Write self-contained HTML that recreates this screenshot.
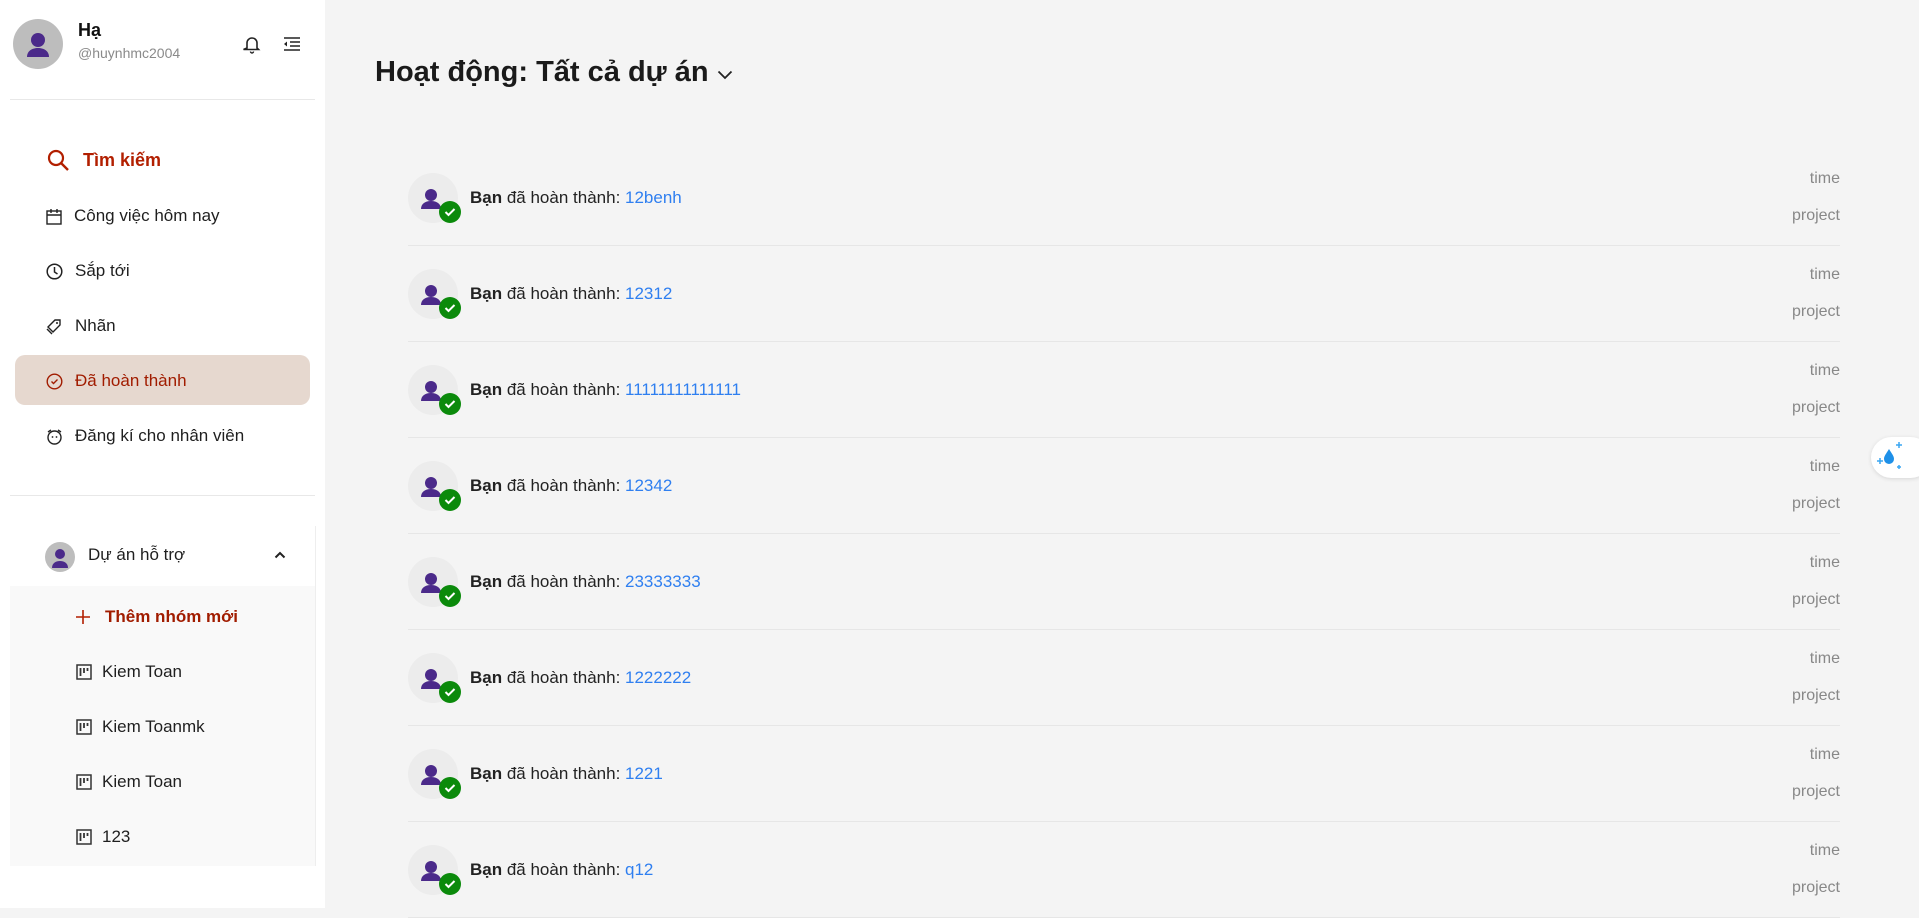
<!DOCTYPE html>
<html><head><meta charset="utf-8"><style>
*{margin:0;padding:0;box-sizing:border-box}
body{width:1919px;height:908px;overflow:hidden;background:#f4f4f4;font-family:"Liberation Sans","Noto Sans CJK SC",sans-serif;color:#1f1f1f;position:relative}
.a{position:absolute}
.sb{left:0;top:0;width:325px;height:908px;background:#fff}
.it{position:absolute;left:46px;font-size:17px;display:flex;align-items:center;height:24px;transform:translateY(-12px)}
.it svg{margin-right:12px}
.sub{position:absolute;left:84px;font-size:17px;display:flex;align-items:center;height:24px;transform:translateY(-12px)}
.sub svg{margin-right:10px}
.row{position:absolute;left:408px;width:1432px;height:96px}
.av{position:absolute;left:0;top:23px;width:50px;height:50px;border-radius:50%;background:#ececec}
.ck{position:absolute;left:31px;top:51px;width:22px;height:22px;border-radius:50%;background:#0b8a0b}
.tx{position:absolute;left:62px;top:38px;font-size:17px;color:#222}
.tx b{font-weight:bold}
.tx span{color:#2f7ff0}
.tm{position:absolute;right:0;top:20px;font-size:16px;color:#888}
.pj{position:absolute;right:0;top:57px;font-size:16px;color:#888}
.ln{position:absolute;left:0;right:0;bottom:0;height:1px;background:#e6e6e6}
</style></head><body>
<div class="a sb"></div>
<div class="a" style="left:13px;top:19px;width:50px;height:50px;border-radius:50%;background:#bdbdbd;overflow:hidden">
<svg width="50" height="50" viewBox="0 0 50 50"><circle cx="25" cy="21" r="7" fill="#4b2a8a"/><path d="M14 38c0-6 5-9 11-9s11 3 11 9z" fill="#4b2a8a"/></svg></div>
<div class="a" style="left:78px;top:20px;font-size:18px;font-weight:bold;color:#111">Hạ</div>
<div class="a" style="left:78px;top:45px;font-size:14px;color:#8a8a8a">@huynhmc2004</div>
<svg class="a" style="left:243px;top:35px" width="18" height="19" viewBox="0 0 18 19"><path d="M4 13V8a5 5 0 0110 0v5l1.5 1.5h-15z" fill="none" stroke="#222" stroke-width="1.6"/><path d="M7.5 16.5a1.5 1.5 0 003 0" stroke="#222" fill="none" stroke-width="1.4"/></svg>
<svg class="a" style="left:283px;top:36px" width="18" height="16" viewBox="0 0 18 16"><path d="M1 2h16M7 6h10M7 10h10M1 14h16" stroke="#222" stroke-width="1.6"/><path d="M4 5.5v5l-3-2.5z" fill="#222"/></svg>
<div class="a" style="left:10px;top:99px;width:305px;height:1px;background:#e8e8e8"></div>
<div class="it" style="top:160px;color:#b21f00;font-weight:bold;font-size:18px"><svg width="24" height="24" viewBox="0 0 24 24" style="margin-right:13px"><circle cx="10" cy="10" r="7" fill="none" stroke="#b21f00" stroke-width="2.2"/><path d="M15 15l7 7" stroke="#b21f00" stroke-width="2.4"/></svg>Tìm kiếm</div>
<div class="it" style="top:216px"><svg width="16" height="17" viewBox="0 0 16 17"><rect x="1" y="3" width="14" height="13" fill="none" stroke="#222" stroke-width="1.4"/><path d="M1 7h14M5 1v4M11 1v4" stroke="#222" stroke-width="1.4"/></svg>Công việc hôm nay</div>
<div class="it" style="top:271px"><svg width="17" height="17" viewBox="0 0 17 17"><circle cx="8.5" cy="8.5" r="7.3" fill="none" stroke="#222" stroke-width="1.5"/><path d="M8.5 4v5l3 2" fill="none" stroke="#222" stroke-width="1.5"/></svg>Sắp tới</div>
<div class="it" style="top:326px"><svg width="17" height="17" viewBox="0 0 17 17"><path d="M2 9l7-7h5v5l-7 7z" fill="none" stroke="#222" stroke-width="1.4"/><path d="M1 11l5 5" stroke="#222" stroke-width="1.4"/><circle cx="11" cy="5" r="1" fill="#222"/></svg>Nhãn</div>
<div class="a" style="left:15px;top:355px;width:295px;height:50px;border-radius:10px;background:#e6d8cf"></div>
<div class="it" style="top:381px;color:#a11c00"><svg width="17" height="17" viewBox="0 0 17 17"><circle cx="8.5" cy="8.5" r="7.3" fill="none" stroke="#a11c00" stroke-width="1.4"/><path d="M5.5 8.5l2 2 4-4" fill="none" stroke="#a11c00" stroke-width="1.4"/></svg>Đã hoàn thành</div>
<div class="it" style="top:436px"><svg width="17" height="17" viewBox="0 0 17 17"><circle cx="8.5" cy="9.5" r="6.5" fill="none" stroke="#222" stroke-width="1.4"/><path d="M2 4l3-2M15 4l-3-2" stroke="#222" stroke-width="1.4"/><circle cx="6.5" cy="9" r=".9" fill="#222"/><circle cx="10.5" cy="9" r=".9" fill="#222"/></svg>Đăng kí cho nhân viên</div>
<div class="a" style="left:10px;top:495px;width:305px;height:1px;background:#e8e8e8"></div>
<div class="a" style="left:45px;top:542px;width:30px;height:30px;border-radius:50%;background:#bdbdbd;overflow:hidden"><svg width="30" height="30" viewBox="0 0 30 30"><circle cx="15" cy="12" r="5" fill="#4b2a8a"/><path d="M7 26c0-5 4-7 8-7s8 2 8 7z" fill="#4b2a8a"/></svg></div>
<div class="a" style="left:88px;top:545px;font-size:17px">Dự án hỗ trợ</div>
<svg class="a" style="left:274px;top:551px" width="12" height="8" viewBox="0 0 12 8"><path d="M1.5 6.5L6 2l4.5 4.5" fill="none" stroke="#222" stroke-width="2"/></svg>
<div class="a" style="left:10px;top:586px;width:305px;height:280px;background:#f9f9f9"></div>
<div class="a" style="left:315px;top:526px;width:1px;height:340px;background:#eee"></div>
<div class="sub" style="top:617px;left:75px;color:#a11c00;font-weight:bold"><svg width="16" height="16" viewBox="0 0 16 16" style="margin-right:14px"><path d="M8 1v14M1 8h14" stroke="#b21f00" stroke-width="1.6"/></svg>Thêm nhóm mới</div>
<div class="sub" style="top:672px;left:76px"><svg width="16" height="16" viewBox="0 0 16 16"><rect x="1" y="1" width="14" height="14" fill="none" stroke="#333" stroke-width="1.5"/><path d="M4.5 4v8M8 4v5M11.5 4v3" stroke="#333" stroke-width="1.8"/></svg>Kiem Toan</div>
<div class="sub" style="top:727px;left:76px"><svg width="16" height="16" viewBox="0 0 16 16"><rect x="1" y="1" width="14" height="14" fill="none" stroke="#333" stroke-width="1.5"/><path d="M4.5 4v8M8 4v5M11.5 4v3" stroke="#333" stroke-width="1.8"/></svg>Kiem Toanmk</div>
<div class="sub" style="top:782px;left:76px"><svg width="16" height="16" viewBox="0 0 16 16"><rect x="1" y="1" width="14" height="14" fill="none" stroke="#333" stroke-width="1.5"/><path d="M4.5 4v8M8 4v5M11.5 4v3" stroke="#333" stroke-width="1.8"/></svg>Kiem Toan</div>
<div class="sub" style="top:837px;left:76px"><svg width="16" height="16" viewBox="0 0 16 16"><rect x="1" y="1" width="14" height="14" fill="none" stroke="#333" stroke-width="1.5"/><path d="M4.5 4v8M8 4v5M11.5 4v3" stroke="#333" stroke-width="1.8"/></svg>123</div>
<div class="a" style="left:375px;top:56px;font-size:29px;font-weight:bold;color:#1a1a1a">Hoạt động: Tất cả dự án</div>
<svg class="a" style="left:717px;top:70px" width="16" height="10" viewBox="0 0 16 10"><path d="M1.5 1.5L8 8l6.5-6.5" fill="none" stroke="#222" stroke-width="1.8"/></svg>

<div class="row" style="top:150px"><div class="av"><svg width="50" height="50" viewBox="0 0 50 50"><circle cx="23" cy="22" r="6" fill="#4b2a8a"/><path d="M13 36c0-5 4-8 10-8s10 3 10 8z" fill="#4b2a8a"/></svg></div><div class="ck"><svg width="22" height="22" viewBox="0 0 22 22"><path d="M6.5 11l3 3 6-6" fill="none" stroke="#fff" stroke-width="2"/></svg></div><div class="tx"><b>Bạn</b> đã hoàn thành: <span>12benh</span></div><div class="tm">time</div><div class="pj">project</div><div class="ln"></div></div>
<div class="row" style="top:246px"><div class="av"><svg width="50" height="50" viewBox="0 0 50 50"><circle cx="23" cy="22" r="6" fill="#4b2a8a"/><path d="M13 36c0-5 4-8 10-8s10 3 10 8z" fill="#4b2a8a"/></svg></div><div class="ck"><svg width="22" height="22" viewBox="0 0 22 22"><path d="M6.5 11l3 3 6-6" fill="none" stroke="#fff" stroke-width="2"/></svg></div><div class="tx"><b>Bạn</b> đã hoàn thành: <span>12312</span></div><div class="tm">time</div><div class="pj">project</div><div class="ln"></div></div>
<div class="row" style="top:342px"><div class="av"><svg width="50" height="50" viewBox="0 0 50 50"><circle cx="23" cy="22" r="6" fill="#4b2a8a"/><path d="M13 36c0-5 4-8 10-8s10 3 10 8z" fill="#4b2a8a"/></svg></div><div class="ck"><svg width="22" height="22" viewBox="0 0 22 22"><path d="M6.5 11l3 3 6-6" fill="none" stroke="#fff" stroke-width="2"/></svg></div><div class="tx"><b>Bạn</b> đã hoàn thành: <span>11111111111111</span></div><div class="tm">time</div><div class="pj">project</div><div class="ln"></div></div>
<div class="row" style="top:438px"><div class="av"><svg width="50" height="50" viewBox="0 0 50 50"><circle cx="23" cy="22" r="6" fill="#4b2a8a"/><path d="M13 36c0-5 4-8 10-8s10 3 10 8z" fill="#4b2a8a"/></svg></div><div class="ck"><svg width="22" height="22" viewBox="0 0 22 22"><path d="M6.5 11l3 3 6-6" fill="none" stroke="#fff" stroke-width="2"/></svg></div><div class="tx"><b>Bạn</b> đã hoàn thành: <span>12342</span></div><div class="tm">time</div><div class="pj">project</div><div class="ln"></div></div>
<div class="row" style="top:534px"><div class="av"><svg width="50" height="50" viewBox="0 0 50 50"><circle cx="23" cy="22" r="6" fill="#4b2a8a"/><path d="M13 36c0-5 4-8 10-8s10 3 10 8z" fill="#4b2a8a"/></svg></div><div class="ck"><svg width="22" height="22" viewBox="0 0 22 22"><path d="M6.5 11l3 3 6-6" fill="none" stroke="#fff" stroke-width="2"/></svg></div><div class="tx"><b>Bạn</b> đã hoàn thành: <span>23333333</span></div><div class="tm">time</div><div class="pj">project</div><div class="ln"></div></div>
<div class="row" style="top:630px"><div class="av"><svg width="50" height="50" viewBox="0 0 50 50"><circle cx="23" cy="22" r="6" fill="#4b2a8a"/><path d="M13 36c0-5 4-8 10-8s10 3 10 8z" fill="#4b2a8a"/></svg></div><div class="ck"><svg width="22" height="22" viewBox="0 0 22 22"><path d="M6.5 11l3 3 6-6" fill="none" stroke="#fff" stroke-width="2"/></svg></div><div class="tx"><b>Bạn</b> đã hoàn thành: <span>1222222</span></div><div class="tm">time</div><div class="pj">project</div><div class="ln"></div></div>
<div class="row" style="top:726px"><div class="av"><svg width="50" height="50" viewBox="0 0 50 50"><circle cx="23" cy="22" r="6" fill="#4b2a8a"/><path d="M13 36c0-5 4-8 10-8s10 3 10 8z" fill="#4b2a8a"/></svg></div><div class="ck"><svg width="22" height="22" viewBox="0 0 22 22"><path d="M6.5 11l3 3 6-6" fill="none" stroke="#fff" stroke-width="2"/></svg></div><div class="tx"><b>Bạn</b> đã hoàn thành: <span>1221</span></div><div class="tm">time</div><div class="pj">project</div><div class="ln"></div></div>
<div class="row" style="top:822px"><div class="av"><svg width="50" height="50" viewBox="0 0 50 50"><circle cx="23" cy="22" r="6" fill="#4b2a8a"/><path d="M13 36c0-5 4-8 10-8s10 3 10 8z" fill="#4b2a8a"/></svg></div><div class="ck"><svg width="22" height="22" viewBox="0 0 22 22"><path d="M6.5 11l3 3 6-6" fill="none" stroke="#fff" stroke-width="2"/></svg></div><div class="tx"><b>Bạn</b> đã hoàn thành: <span>q12</span></div><div class="tm">time</div><div class="pj">project</div><div class="ln"></div></div>

<div class="a" style="left:1871px;top:437px;width:60px;height:41px;border-radius:21px;background:#fff;box-shadow:0 1px 4px rgba(0,0,0,.12)">
<svg width="40" height="41" viewBox="0 0 40 41"><path d="M18 12c-3 5-5 7-5 10a5 5 0 0010 0c0-3-2-5-5-10z" fill="#1e90e8"/><path d="M6 24h6M9 21v6M25 8h6M28 5v6M26 30h4M28 28v4" stroke="#3aa6f2" stroke-width="1.5"/></svg></div>
</body></html>
